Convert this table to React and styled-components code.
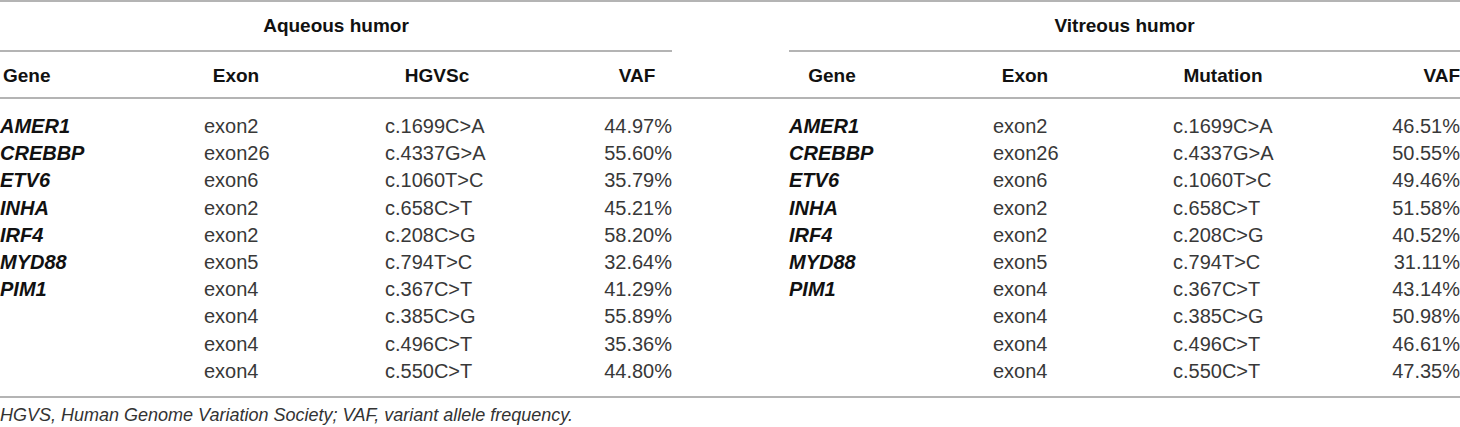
import React from "react";
import styled, { createGlobalStyle } from "styled-components";

const Global = createGlobalStyle`
  html, body { margin: 0; padding: 0; background: #fff; }
  body { font-family: "Liberation Sans", Arial, sans-serif; color: #222; }
`;

const COLS = "204px 181px 218px 69px 117px 204px 180px 219px 68px";

const Page = styled.div`
  width: 1460px;
  overflow: hidden;
`;

const Table = styled.div`
  border-top: 2px solid #b4b4b4;
  border-bottom: 2px solid #b4b4b4;
`;

const GroupRow = styled.div`
  display: flex;
  justify-content: space-between;
  height: 50px;
`;

const Group = styled.div`
  width: ${(p) => p.$w}px;
  border-bottom: 2px solid #b4b4b4;
  display: flex;
  align-items: center;
  justify-content: center;
  box-sizing: border-box;
  font-weight: 700;
  font-size: 19px;
  color: #111;
`;

const HeadRow = styled.div`
  display: grid;
  grid-template-columns: ${COLS};
  height: 47px;
  padding-top: 3px;
  box-sizing: border-box;
  align-items: center;
  border-bottom: 2px solid #b4b4b4;
`;

const HeadCell = styled.div`
  width: ${(p) => p.$w}px;
  text-align: ${(p) => p.$align || "center"};
  padding-left: ${(p) => p.$pad || 0}px;
  box-sizing: border-box;
  font-weight: 700;
  font-size: 19px;
  color: #111;
  white-space: nowrap;
`;

const Body = styled.div`
  padding: 14px 0 11px;
`;

const Row = styled.div`
  display: grid;
  grid-template-columns: ${COLS};
  height: 27.2px;
  align-items: center;
  font-size: 20px;
  color: #383838;
  white-space: nowrap;
`;

const Cell = styled.div`
  text-align: ${(p) => (p.$right ? "right" : "left")};
`;

const GeneCell = styled.div`
  font-weight: 700;
  font-style: italic;
  color: #111;
`;

const Foot = styled.div`
  font-style: italic;
  font-size: 18px;
  color: #333;
  padding-top: 7px;
`;

const left = [
  ["AMER1", "exon2", "c.1699C>A", "44.97%"],
  ["CREBBP", "exon26", "c.4337G>A", "55.60%"],
  ["ETV6", "exon6", "c.1060T>C", "35.79%"],
  ["INHA", "exon2", "c.658C>T", "45.21%"],
  ["IRF4", "exon2", "c.208C>G", "58.20%"],
  ["MYD88", "exon5", "c.794T>C", "32.64%"],
  ["PIM1", "exon4", "c.367C>T", "41.29%"],
  ["", "exon4", "c.385C>G", "55.89%"],
  ["", "exon4", "c.496C>T", "35.36%"],
  ["", "exon4", "c.550C>T", "44.80%"],
];

const right = [
  ["AMER1", "exon2", "c.1699C>A", "46.51%"],
  ["CREBBP", "exon26", "c.4337G>A", "50.55%"],
  ["ETV6", "exon6", "c.1060T>C", "49.46%"],
  ["INHA", "exon2", "c.658C>T", "51.58%"],
  ["IRF4", "exon2", "c.208C>G", "40.52%"],
  ["MYD88", "exon5", "c.794T>C", "31.11%"],
  ["PIM1", "exon4", "c.367C>T", "43.14%"],
  ["", "exon4", "c.385C>G", "50.98%"],
  ["", "exon4", "c.496C>T", "46.61%"],
  ["", "exon4", "c.550C>T", "47.35%"],
];

export default function App() {
  return (
    <Page>
      <Global />
      <Table>
        <GroupRow>
          <Group $w={672}>Aqueous humor</Group>
          <Group $w={671}>Vitreous humor</Group>
        </GroupRow>
        <HeadRow>
          <HeadCell $w={86} $align="left" $pad={3}>Gene</HeadCell>
          <HeadCell $w={64}>Exon</HeadCell>
          <HeadCell $w={104}>HGVSc</HeadCell>
          <HeadCell $w={68}>VAF</HeadCell>
          <div />
          <HeadCell $w={86}>Gene</HeadCell>
          <HeadCell $w={64}>Exon</HeadCell>
          <HeadCell $w={100}>Mutation</HeadCell>
          <HeadCell $w={68} $align="right">VAF</HeadCell>
        </HeadRow>
        <Body>
          {left.map((l, i) => {
            const r = right[i];
            return (
              <Row key={i}>
                <GeneCell>{l[0]}</GeneCell>
                <Cell>{l[1]}</Cell>
                <Cell>{l[2]}</Cell>
                <Cell $right>{l[3]}</Cell>
                <div />
                <GeneCell>{r[0]}</GeneCell>
                <Cell>{r[1]}</Cell>
                <Cell>{r[2]}</Cell>
                <Cell $right>{r[3]}</Cell>
              </Row>
            );
          })}
        </Body>
      </Table>
      <Foot>HGVS, Human Genome Variation Society; VAF, variant allele frequency.</Foot>
    </Page>
  );
}
